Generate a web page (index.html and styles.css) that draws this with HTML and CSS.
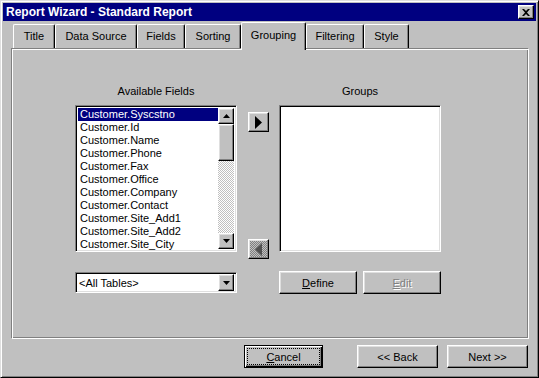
FILE: index.html
```html
<!DOCTYPE html>
<html>
<head>
    <title>Report Wizard - Standard Report</title>
    <link rel="stylesheet" href="styles.css">
</head>
<body>
    <div class="window">
        <div class="titlebar">
            <span class="title">Report Wizard - Standard Report</span>
            <div class="close raised">
                <svg width="8" height="7" viewBox="0 0 8 7"><path d="M0 0h2l2 2 2-2h2L5 3.5 8 7H6L4 5 2 7H0l3-3.5z" fill="#000"/></svg>
            </div>
        </div>

        <div class="tabs">
            <div class="tab w-title">Title</div>
            <div class="tab w-source">Data Source</div>
            <div class="tab w-fields">Fields</div>
            <div class="tab w-sorting">Sorting</div>
            <div class="tab w-grouping active">Grouping</div>
            <div class="tab w-filtering">Filtering</div>
            <div class="tab w-style">Style</div>
        </div>

        <div class="panel">
            <div class="pickers">
                <div class="field-col">
                    <div class="col-label">Available Fields</div>
                    <div class="listbox sunken">
                        <ul class="items">
                            <li class="selected">Customer.Syscstno</li>
                            <li>Customer.Id</li>
                            <li>Customer.Name</li>
                            <li>Customer.Phone</li>
                            <li>Customer.Fax</li>
                            <li>Customer.Office</li>
                            <li>Customer.Company</li>
                            <li>Customer.Contact</li>
                            <li>Customer.Site_Add1</li>
                            <li>Customer.Site_Add2</li>
                            <li>Customer.Site_City</li>
                        </ul>
                        <div class="vscroll">
                            <div class="sbtn raised">
                                <svg width="7" height="4" viewBox="0 0 7 4"><path d="M3.5 0L7 4H0z" fill="#000"/></svg>
                            </div>
                            <div class="thumb raised"></div>
                            <div class="track"></div>
                            <div class="sbtn raised">
                                <svg width="7" height="4" viewBox="0 0 7 4"><path d="M0 0h7L3.5 4z" fill="#000"/></svg>
                            </div>
                        </div>
                    </div>
                </div>

                <div class="arrows">
                    <div class="arrow-btn raised">
                        <svg width="7" height="13" viewBox="0 0 7 13"><path d="M0 0L7 6.5 0 13z" fill="#000"/></svg>
                    </div>
                    <div class="arrow-btn raised disabled">
                        <svg width="7" height="13" viewBox="0 0 7 13"><path d="M7 0L0 6.5 7 13z" fill="#505050"/></svg>
                    </div>
                </div>

                <div class="field-col">
                    <div class="col-label">Groups</div>
                    <div class="listbox sunken"></div>
                </div>
            </div>

            <div class="controls">
                <div class="combo sunken">
                    <span class="combo-text">&lt;All Tables&gt;</span>
                    <div class="drop-btn raised">
                        <svg width="7" height="4" viewBox="0 0 7 4"><path d="M0 0h7L3.5 4z" fill="#000"/></svg>
                    </div>
                </div>
                <div class="push raised define"><u>D</u>efine</div>
                <div class="push raised edit disabled"><u>E</u>dit</div>
            </div>
        </div>

        <div class="footer">
            <div class="push default cancel"><span class="focus-ring"><u>C</u>ancel</span></div>
            <div class="push raised back">&lt;&lt; Back</div>
            <div class="push raised next">Next &gt;&gt;</div>
        </div>
    </div>
</body>
</html>
```

FILE: styles.css
```css
body {
    margin: 0;
    background: #c0c0c0;
    font-family: "Liberation Sans", Arial, sans-serif;
    font-size: 11px;
    color: #000;
}
.window {
    width: 539px;
    height: 378px;
    box-sizing: border-box;
    padding: 2px;
    background: #c0c0c0;
    border: 1px solid;
    border-color: #dfdfdf #000 #000 #dfdfdf;
    box-shadow: inset 1px 1px #fff, inset -1px -1px #808080;
    display: flex;
    flex-direction: column;
}

/* 3d edges */
.raised {
    box-sizing: border-box;
    background: #c0c0c0;
    border: 1px solid;
    border-color: #fff #000 #000 #fff;
    box-shadow: inset -1px -1px #808080, inset 1px 1px #dfdfdf;
}
.sunken {
    box-sizing: border-box;
    background: #fff;
    border: 1px solid;
    border-color: #808080 #fff #fff #808080;
    box-shadow: inset 1px 1px #000, inset -1px -1px #dfdfdf;
}

/* title bar */
.titlebar {
    height: 18px;
    background: #000080;
    color: #fff;
    display: flex;
    align-items: center;
    justify-content: space-between;
    padding: 0 2px 0 3px;
}
.title {
    font-weight: bold;
    font-size: 12px;
}
.close {
    width: 16px;
    height: 14px;
    display: flex;
    align-items: center;
    justify-content: center;
}

/* tabs */
.tabs {
    display: flex;
    align-items: flex-end;
    height: 26px;
    margin: 1px 0 0 10px;
}
.tab {
    height: 24px;
    box-sizing: border-box;
    padding-top: 5px;
    text-align: center;
    border-top: 1px solid #fff;
    border-left: 1px solid #fff;
    border-right: 1px solid #000;
    border-radius: 2px 2px 0 0;
    box-shadow: inset -1px 0 #808080;
}
.tab.active {
    height: 28px;
    padding-top: 6px;
    margin-bottom: -2px;
    position: relative;
    z-index: 1;
    background: #c0c0c0;
}
.w-title { width: 42px; }
.w-source { width: 82px; }
.w-fields { width: 48px; }
.w-sorting { width: 56px; }
.w-grouping { width: 65px; }
.w-filtering { width: 58px; }
.w-style { width: 45px; }

/* panel, etched edge */
.panel {
    width: 518px;
    height: 291px;
    margin-left: 8px;
    box-sizing: border-box;
    padding: 36px 0 0 63px;
    border: 1px solid;
    border-color: #808080 #fff #fff #808080;
    box-shadow: inset 1px 1px #fff, inset -1px -1px #808080;
}
.pickers {
    display: flex;
    align-items: flex-start;
}
.field-col {
    width: 162px;
}
.col-label {
    height: 13px;
    line-height: 13px;
    text-align: center;
    margin-bottom: 7px;
}
.listbox {
    height: 147px;
    display: flex;
    padding: 2px;
}
.items {
    flex: 1;
    list-style: none;
    margin: 0;
    padding: 0;
}
.items li {
    height: 13px;
    line-height: 13px;
    padding-left: 2px;
    white-space: nowrap;
}
.items li.selected {
    background: #000080;
    color: #fff;
}
.vscroll {
    width: 16px;
    display: flex;
    flex-direction: column;
}
.sbtn {
    height: 16px;
    display: flex;
    align-items: center;
    justify-content: center;
}
.thumb {
    height: 37px;
}
.track {
    flex: 1;
    background: repeating-conic-gradient(#c0c0c0 0 25%, #fff 0 50%) 0 0 / 2px 2px;
}

.arrows {
    width: 21px;
    margin: 27px 10px 0 11px;
}
.arrow-btn {
    height: 20px;
    display: flex;
    align-items: center;
    justify-content: center;
}
.arrow-btn.disabled {
    margin-top: 107px;
    background: repeating-conic-gradient(#c0c0c0 0 25%, #808080 0 50%) 0 0 / 2px 2px;
}

/* bottom controls */
.controls {
    display: flex;
    align-items: flex-start;
    margin-top: 12px;
}
.combo {
    width: 162px;
    height: 21px;
    margin-top: 1px;
    padding: 2px;
    display: flex;
    align-items: center;
}
.combo-text {
    flex: 1;
    padding-left: 1px;
}
.drop-btn {
    width: 16px;
    height: 17px;
    display: flex;
    align-items: center;
    justify-content: center;
}
.push {
    height: 23px;
    display: flex;
    align-items: center;
    justify-content: center;
    box-sizing: border-box;
}
.define {
    width: 78px;
    margin-left: 42px;
}
.edit {
    width: 78px;
    margin-left: 6px;
}
.disabled.push {
    color: #808080;
    text-shadow: 1px 1px #fff;
}

/* footer buttons */
.footer {
    display: flex;
    justify-content: flex-end;
    margin-top: 6px;
    padding-right: 8px;
}
.default {
    background: #c0c0c0;
    border: 1px solid #000;
    box-shadow: inset 1px 1px #fff, inset -1px -1px #000, inset -2px -2px #808080;
    padding: 2px;
    align-items: stretch;
}
.focus-ring {
    flex: 1;
    display: flex;
    align-items: center;
    justify-content: center;
    border: 1px dotted #000;
}
.cancel { width: 79px; }
.back {
    width: 81px;
    margin-left: 34px;
}
.next {
    width: 81px;
    margin-left: 9px;
}
```
